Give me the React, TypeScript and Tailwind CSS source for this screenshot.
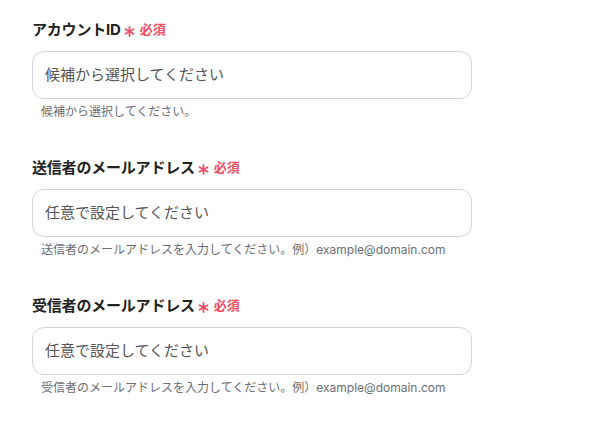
import React from 'react'

const fields = [
  { label: 'アカウントID', placeholder: '候補から選択してください', help: '候補から選択してください。' },
  {
    label: '送信者のメールアドレス',
    placeholder: '任意で設定してください',
    help: '送信者のメールアドレスを入力してください。例）example@domain.com',
  },
  {
    label: '受信者のメールアドレス',
    placeholder: '任意で設定してください',
    help: '受信者のメールアドレスを入力してください。例）example@domain.com',
  },
]

export default function App() {
  return (
    <div
      className="w-[601px] h-[429px] bg-white pl-[32px] pt-[20px] flex flex-col gap-[38px]"
      style={{ fontFamily: 'Inter, "Noto Sans CJK JP", sans-serif' }}
    >
      {fields.map((f, key) => (
        <Field key={key} {...f} />
      ))}
    </div>
  )
}

const Asterisk = () => (
  <svg width="11" height="11" viewBox="0 0 10 10" className="mt-[3px]">
    <g stroke="#f24e63" strokeWidth="1.6" strokeLinecap="round">
      <line x1="5" y1="0.8" x2="5" y2="9.2" />
      <line x1="1.4" y1="2.9" x2="8.6" y2="7.1" />
      <line x1="1.4" y1="7.1" x2="8.6" y2="2.9" />
    </g>
  </svg>
)

const Field = ({ label, placeholder, help }: { label: string; placeholder: string; help: string }) => {
  return (
    <div className="flex flex-col w-[440px]">
      <div className="flex items-center h-[20px]">
        <span className="text-[15px] font-bold text-[#222] tracking-[-0.2px]">{label}</span>
        <span className="ml-[3px]">
          <Asterisk />
        </span>
        <span className="ml-[5px] text-[#f24e63] text-[13px] font-bold">必須</span>
      </div>
      <div className="mt-[11px] h-[48px] rounded-[12px] border border-[#d3d5da] flex items-center px-[12px]">
        <span className="text-[15px] text-[#555]">{placeholder}</span>
      </div>
      <div className="mt-[5px] leading-[16px] text-[12px] text-[#6b6e75] pl-[9px]">{help}</div>
    </div>
  )
}
